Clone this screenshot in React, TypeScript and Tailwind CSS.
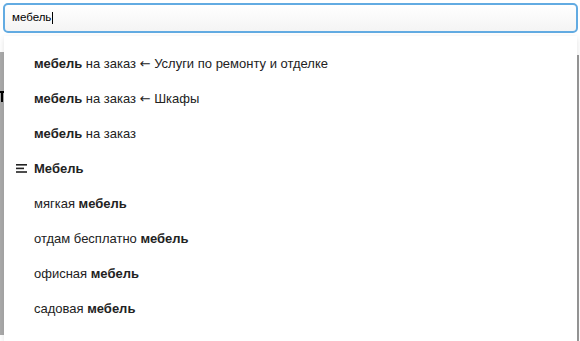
import React from "react";

const items: { pre?: string; bold: string; post?: string; arrow?: string; icon?: boolean }[] = [
  { bold: "мебель", post: " на заказ ", arrow: " Услуги по ремонту и отделке" },
  { bold: "мебель", post: " на заказ ", arrow: " Шкафы" },
  { bold: "мебель", post: " на заказ" },
  { bold: "Мебель", icon: true },
  { pre: "мягкая ", bold: "мебель" },
  { pre: "отдам бесплатно ", bold: "мебель" },
  { pre: "офисная ", bold: "мебель" },
  { pre: "садовая ", bold: "мебель" },
];

export default function App() {
  return (
    <div
      className="relative w-[580px] h-[341px] overflow-hidden bg-white text-[#222]"
      style={{ fontFamily: '"Liberation Sans", Arial, sans-serif' }}
    >
      {/* page behind */}
      <div className="flex h-full">
        <div className="w-[4px] mt-[52px] h-[283px] bg-[#ababab] overflow-hidden flex flex-col">
          <div className="mt-[39px] h-[2px] w-[4px] bg-black" />
          <div className="ml-[1px] h-[9px] w-[2px] bg-black" />
        </div>
        <div className="flex-1" />
        <div className="w-[2px] mr-[1px] mt-[55px] bg-[#9a9a9a]" />
      </div>

      {/* search input */}
      <div className="absolute left-[3px] top-[3px] w-[575px] h-[30px] rounded-[5px] border-2 border-[#62abe2] bg-gradient-to-b from-white to-[#f4f4f4] flex items-center pl-[7px] text-[11.5px] text-black">
        <span>мебель</span>
        <span className="w-[1px] h-[12px] bg-black ml-[1px]" />
      </div>

      {/* dropdown */}
      <div className="absolute left-[4px] right-[3px] top-[36px] bottom-0 bg-white shadow-[0_2px_6px_rgba(0,0,0,0.12)] pt-[10px]">
        {items.map((it, i) => (
          <div key={i} className="h-[35px] flex items-center text-[13px] relative">
            {it.icon && (
              <svg className="absolute left-[12px]" width="11" height="9" viewBox="0 0 11 9">
                <rect x="0" y="0" width="11" height="1.6" fill="#222" />
                <rect x="0" y="3.6" width="8" height="1.6" fill="#222" />
                <rect x="0" y="7.2" width="11" height="1.6" fill="#222" />
              </svg>
            )}
            <span className="pl-[30px] whitespace-pre">
              {it.pre}
              <b className="font-bold">{it.bold}</b>
              {it.post}
              {it.arrow && (
                <>
                  <span style={{ fontFamily: '"DejaVu Sans", sans-serif' }} className="text-[13px]">←</span>
                  {it.arrow}
                </>
              )}
            </span>
          </div>
        ))}
      </div>
    </div>
  );
}
